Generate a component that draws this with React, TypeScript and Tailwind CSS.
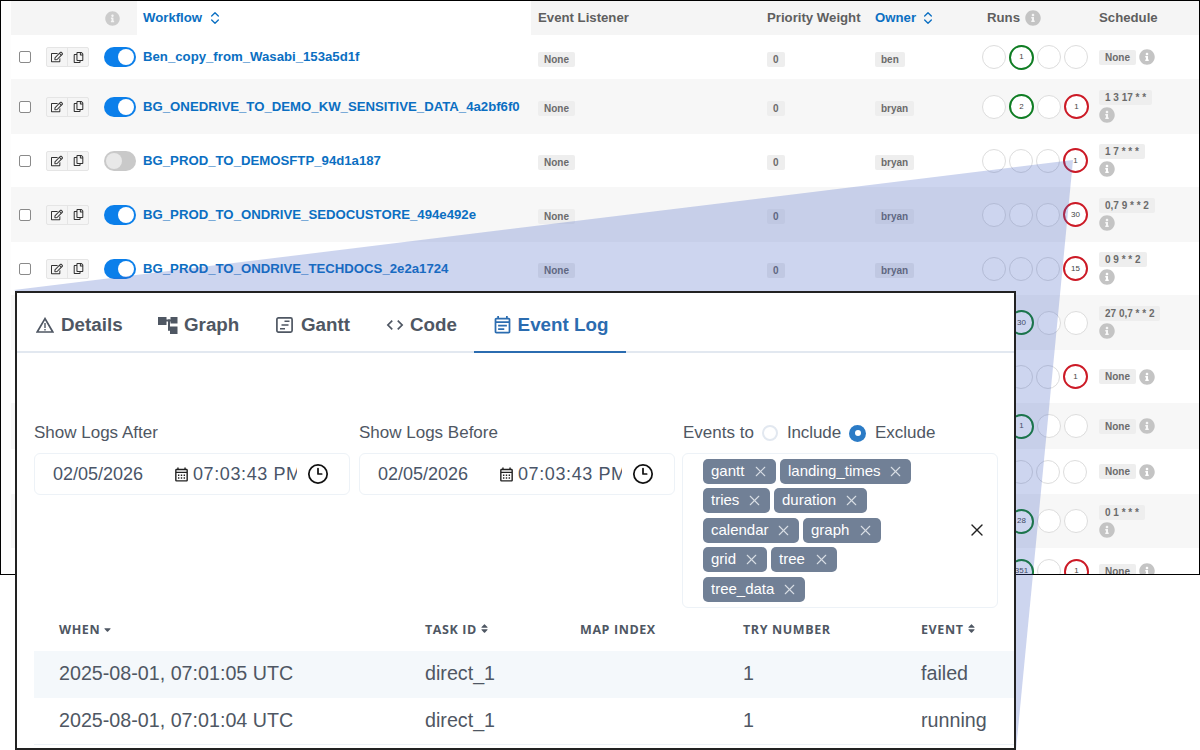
import { ChevronsUpDown, Clock3, X } from "lucide-react";
import { FaInfoCircle, FaRegCopy, FaRegEdit, FaSort, FaSortDown } from "react-icons/fa";
import { MdCode, MdOutlineCalendarMonth, MdOutlineEventNote } from "react-icons/md";

type Run = { n: string; c: "g" | "r" } | null;
type Row = { name: string; on: boolean; owner: string; runs: Run[]; sched: string; h: string; alt: boolean; wrap: boolean };
const g = (n: string): Run => ({ n, c: "g" });
const r = (n: string): Run => ({ n, c: "r" });

const rows: Row[] = [
  { name: "Ben_copy_from_Wasabi_153a5d1f", on: true, owner: "ben", runs: [null, g("1"), null, null], sched: "None", h: "h-[44px]", alt: false, wrap: false },
  { name: "BG_ONEDRIVE_TO_DEMO_KW_SENSITIVE_DATA_4a2bf6f0", on: true, owner: "bryan", runs: [null, g("2"), null, r("1")], sched: "1 3 17 * *", h: "h-[55px]", alt: true, wrap: true },
  { name: "BG_PROD_TO_DEMOSFTP_94d1a187", on: false, owner: "bryan", runs: [null, null, null, r("1")], sched: "1 7 * * *", h: "h-[53px]", alt: false, wrap: true },
  { name: "BG_PROD_TO_ONDRIVE_SEDOCUSTORE_494e492e", on: true, owner: "bryan", runs: [null, null, null, r("30")], sched: "0,7 9 * * 2", h: "h-[55px]", alt: true, wrap: true },
  { name: "BG_PROD_TO_ONDRIVE_TECHDOCS_2e2a1724", on: true, owner: "bryan", runs: [null, null, null, r("15")], sched: "0 9 * * 2", h: "h-[53px]", alt: false, wrap: true },
  { name: "BG_PROD_TO_ONEDRIVE_ARCHIVE_7c1e0b3a", on: true, owner: "bryan", runs: [null, g("30"), null, null], sched: "27 0,7 * * 2", h: "h-[55px]", alt: true, wrap: true },
  { name: "BG_PROD_TO_SFTP_REPORTS_51f0c2de", on: true, owner: "bryan", runs: [null, null, null, r("1")], sched: "None", h: "h-[53px]", alt: false, wrap: false },
  { name: "BG_SFTP_TO_DEMO_6ad3e981", on: true, owner: "bryan", runs: [null, g("1"), null, null], sched: "None", h: "h-[46px]", alt: true, wrap: false },
  { name: "BG_TEST_COPY_3b7d10fe", on: true, owner: "bryan", runs: [null, null, null, null], sched: "None", h: "h-[45px]", alt: false, wrap: false },
  { name: "BG_WASABI_TO_DEMO_90c4ab12", on: true, owner: "bryan", runs: [null, g("28"), null, null], sched: "0 1 * * *", h: "h-[54px]", alt: true, wrap: true },
  { name: "BG_WASABI_TO_ONEDRIVE_e41f6a77", on: true, owner: "bryan", runs: [null, g("351"), null, r("1")], sched: "None", h: "h-[46px]", alt: false, wrap: false },
];

const tableCols = "grid grid-cols-[35px_58px_33px_394px_229px_108px_111px_113px_78px]";

function Info({ className }: { className: string }) {
  return <FaInfoCircle className={`shrink-0 text-[#c4c4c4] ${className}`} />;
}

function Pill({ children }: { children: string }) {
  return <span className="inline-block whitespace-pre rounded-[2px] bg-[#eeeeee] px-[6px] py-[1px] text-[10px] font-bold leading-[13px] text-[#6b6b6b]">{children}</span>;
}

function Circle({ run }: { run: Run }) {
  if (!run) return <div className="h-[24px] w-[24px] shrink-0 rounded-full border border-[#dddddd] bg-white" />;
  const ring = run.c === "g" ? "border-[#0f7d23]" : "border-[#cc1a26]";
  return (
    <div className={`flex h-[25px] w-[25px] shrink-0 items-center justify-center rounded-full border-2 bg-white text-[8px] text-[#444444] ${ring}`}>{run.n}</div>
  );
}

function Toggle({ on }: { on: boolean }) {
  return (
    <div className={`flex h-[20px] w-[32px] items-center rounded-full p-[2px] ${on ? "justify-end bg-[#0b7fea]" : "justify-start bg-[#c9c9c9]"}`}>
      <div className={`h-[16px] w-[16px] rounded-full ${on ? "bg-white" : "bg-[#e8e8e8]"}`} />
    </div>
  );
}

function BackWindow() {
  return (
    <div className="absolute left-0 top-0 h-[575px] w-[1200px] overflow-hidden border border-black bg-[#fdfdfd] pl-[10px] text-[13.2px] [font-family:'Liberation_Sans',Arial,sans-serif]">
      <div className={`${tableCols} h-[34px] items-center bg-[#f5f5f5] font-bold text-[#5f5f5f]`}>
        <div />
        <div />
        <div className="flex justify-start pl-[1px]"><Info className="text-[15px] text-[#cccccc]" /></div>
        <div className="flex h-full items-center gap-[5px] bg-white pl-[6px] text-[#0b6fc2]">Workflow <ChevronsUpDown size={16} strokeWidth={2} /></div>
        <div className="pl-[7px]">Event Listener</div>
        <div className="pl-[7px]">Priority Weight</div>
        <div className="flex items-center gap-[4px] pl-[7px] text-[#0b6fc2]">Owner <ChevronsUpDown size={16} strokeWidth={2} /></div>
        <div className="flex items-center gap-[5px] pl-[8px]">Runs <Info className="text-[16px]" /></div>
        <div className="pl-[7px]">Schedule</div>
      </div>
      {rows.map((row) => (
        <div key={row.name} className={`${tableCols} ${row.h} items-center ${row.alt ? "bg-[#f7f7f7]" : "bg-white"}`}>
          <div className="pl-[8px]">
            <div className="h-[12px] w-[12px] rounded-[2px] border border-[#8a8a8a] bg-white" />
          </div>
          <div className="flex h-[20px] w-[43px] rounded-[2px] border border-[#e5e5e5] bg-[#f5f5f5] text-[#333333]">
            <span className="flex flex-1 items-center justify-center border-r border-[#e5e5e5]"><FaRegEdit size={12} /></span>
            <span className="flex flex-1 items-center justify-center"><FaRegCopy size={11} /></span>
          </div>
          <Toggle on={row.on} />
          <div className="whitespace-nowrap pl-[6px] font-bold text-[#0b6fc2]">{row.name}</div>
          <div className="pl-[7px] pt-[3px]"><Pill>None</Pill></div>
          <div className="pl-[7px] pt-[3px]"><Pill>0</Pill></div>
          <div className="pl-[7px] pt-[3px]"><Pill>{row.owner}</Pill></div>
          <div className="flex items-center gap-[3px] pl-[3px]">
            {row.runs.map((run, i) => <Circle key={i} run={run} />)}
          </div>
          <div className={`pl-[7px] ${row.wrap ? "flex flex-col items-start gap-[2px]" : "flex items-center gap-[3px]"}`}>
            <Pill>{row.sched}</Pill>
            <Info className="text-[16px]" />
          </div>
        </div>
      ))}
    </div>
  );
}

function WarnIcon() {
  return (
    <svg width="18" height="16" viewBox="0 0 18 16" fill="none" className="mr-[2px] shrink-0" stroke="currentColor">
      <path d="M9 1.6 1.2 15h15.6z" strokeWidth="1.7" strokeLinejoin="miter" />
      <path d="M9 6v5M9 12v1.6" strokeWidth="1.4" />
    </svg>
  );
}

function GraphIcon() {
  return (
    <svg width="20" height="17" viewBox="0 0 20 17" fill="currentColor" className="mr-[1px] shrink-0">
      <rect x="0" y="0" width="8.5" height="8" />
      <rect x="12.5" y="0" width="7" height="6.5" />
      <rect x="12" y="9.5" width="7.5" height="7.5" />
      <rect x="8" y="2.5" width="5" height="2" />
      <rect x="10" y="2.5" width="2" height="11" />
      <rect x="10" y="11.5" width="3" height="2" />
    </svg>
  );
}

function GanttIcon() {
  return (
    <svg width="17" height="16" viewBox="0 0 17 16" fill="none" stroke="currentColor" className="mr-[3px] ml-[1px] shrink-0">
      <rect x="0.9" y="0.9" width="15.2" height="14.2" rx="1.5" strokeWidth="1.7" />
      <path d="M8.5 4.2h5M5.5 8h7M4 11.8h5" strokeWidth="1.5" />
    </svg>
  );
}

function CodeIcon() {
  return <MdCode className="text-[20px]" />;
}

const tabs = [
  { label: "Details", Icon: WarnIcon, w: "w-[122px]" },
  { label: "Graph", Icon: GraphIcon, w: "w-[117px]" },
  { label: "Gantt", Icon: GanttIcon, w: "w-[110px]" },
  { label: "Code", Icon: CodeIcon, w: "w-[89px]" },
];

function DateField() {
  return (
    <div className="flex h-[42px] w-[316px] items-center rounded-[6px] border border-[#edf2f7] pl-[18px] pr-[20px] text-[18px] text-[#4a5568]">
      <span className="w-[120px]">02/05/2026</span>
      <MdOutlineCalendarMonth className="text-[17px] text-[#222222]" />
      <span className="ml-[3px] w-[104px] overflow-hidden whitespace-nowrap tracking-[0.6px]">07:03:43 PM</span>
      <Clock3 size={22} strokeWidth={1.9} className="ml-auto text-[#111111]" />
    </div>
  );
}

const tagRows = [
  [["gantt", "w-[73px]"], ["landing_times", "w-[131px]"]],
  [["tries", "w-[67px]"], ["duration", "w-[93px]"]],
  [["calendar", "w-[96px]"], ["graph", "w-[78px]"]],
  [["grid", "w-[64px]"], ["tree", "w-[66px]"]],
  [["tree_data", "w-[102px]"]],
];

function Tag({ label, w }: { label: string; w: string }) {
  return (
    <div className={`flex h-[25px] ${w} items-center justify-between rounded-[5px] bg-[#718096] pl-[8px] pr-[7px] text-[15px] text-white`}>
      <span>{label}</span>
      <X size={17} strokeWidth={1.5} className="text-[#d8dde5]" />
    </div>
  );
}

const logCols = "grid grid-cols-[366px_155px_163px_178px_1fr] pl-[25px]";
const logRows = [
  ["2025-08-01, 07:01:05 UTC", "direct_1", "", "1", "failed"],
  ["2025-08-01, 07:01:04 UTC", "direct_1", "", "1", "running"],
];

function HeadCell({ label, icon }: { label: string; icon?: "down" | "sort" }) {
  return (
    <div className="flex items-center gap-[2px]">
      {label}
      {icon === "down" && <FaSortDown className="mb-[6px] text-[11px]" />}
      {icon === "sort" && <FaSort className="mb-[3px] text-[11px]" />}
    </div>
  );
}

function FrontWindow() {
  return (
    <div className="absolute left-[15px] top-[291px] h-[459px] w-[1001px] overflow-hidden border-2 border-[#222222] bg-white text-[#4f5763] [font-family:'Liberation_Sans',Arial,sans-serif]">
      <div className="flex h-[60px] items-stretch border-b-2 border-[#e2e8f0] pl-[19px] text-[18.8px] font-bold">
        {tabs.map(({ label, Icon, w }) => (
          <div key={label} className={`flex ${w} items-center gap-[5px] pt-[6px]`}>
            <Icon />
            {label}
          </div>
        ))}
        <div className="mb-[-2px] flex w-[152px] items-center justify-center gap-[5px] border-b-2 border-[#2b6cb0] pt-[6px] text-[#2b6cb0]">
          <MdOutlineEventNote className="text-[21px]" />
          Event Log
        </div>
      </div>
      <div className="grid grid-cols-[325px_323px_316px] pl-[17px] pt-[68px]">
        <div>
          <div className="mb-[8px] h-[24px] text-[17px] leading-[24px]">Show Logs After</div>
          <DateField />
        </div>
        <div>
          <div className="mb-[8px] h-[24px] text-[17px] leading-[24px]">Show Logs Before</div>
          <DateField />
        </div>
        <div>
          <div className="mb-[8px] flex h-[24px] items-center text-[17px] leading-[24px]">
            <span className="pl-[1px]">Events to</span>
            <span className="ml-[8px] h-[16px] w-[16px] rounded-full border-2 border-[#e2e8f0]" />
            <span className="ml-[9px] tracking-[-0.1px]">Include</span>
            <span className="ml-[8px] flex h-[17px] w-[17px] items-center justify-center rounded-full bg-[#2b7bc6]">
              <span className="h-[6px] w-[6px] rounded-full bg-white" />
            </span>
            <span className="ml-[9px]">Exclude</span>
          </div>
          <div className="flex h-[155px] items-center rounded-[6px] border border-[#edf2f7] pb-[1px] pl-[20px] pr-[10px]">
            <div className="flex flex-1 flex-col gap-[4.5px]">
              {tagRows.map((tr, i) => (
                <div key={i} className="flex gap-[4px]">
                  {tr.map(([label, w]) => <Tag key={label} label={label} w={w} />)}
                </div>
              ))}
            </div>
            <X size={20} strokeWidth={1.6} className="text-[#222222]" />
          </div>
        </div>
      </div>
      <div className="mt-[8px] pl-[17px]">
        <div className={`${logCols} h-[35px] items-center pb-[7px] text-[12.5px] font-bold tracking-[0.6px] [font-family:'Open_Sans',sans-serif]`}>
          <HeadCell label="WHEN" icon="down" />
          <HeadCell label="TASK ID" icon="sort" />
          <HeadCell label="MAP INDEX" />
          <HeadCell label="TRY NUMBER" />
          <HeadCell label="EVENT" icon="sort" />
        </div>
        {logRows.map((row, i) => (
          <div key={row[0]} className={`${logCols} h-[47px] items-center text-[19.7px] ${i === 0 ? "bg-[#f4f8fb] pb-[2px]" : "border-b border-[#edf2f7]"}`}>
            {row.map((c, j) => <div key={j}>{c}</div>)}
          </div>
        ))}
      </div>
    </div>
  );
}

export default function App() {
  return (
    <div className="relative h-[750px] w-[1200px] overflow-hidden bg-white">
      <BackWindow />
      <svg className="absolute left-0 top-0" width="1200" height="750" viewBox="0 0 1200 750">
        <polygon points="1073,160 14,290 1016,750" fill="#3f5cc0" fillOpacity="0.26" />
      </svg>
      <FrontWindow />
    </div>
  );
}
